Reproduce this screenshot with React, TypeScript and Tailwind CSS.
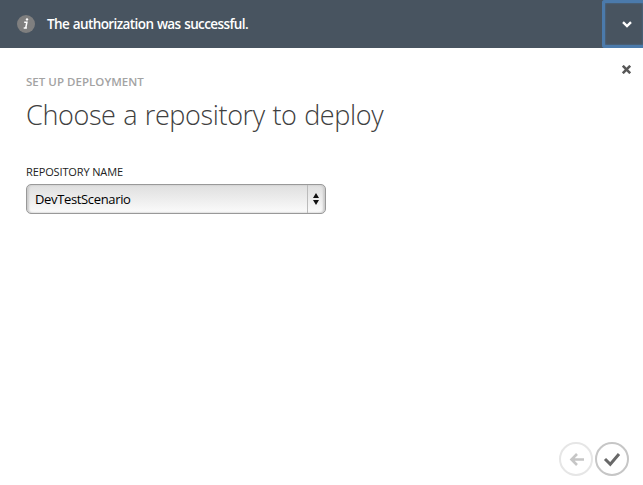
export default function App() {
  return (
    <div className="flex h-[485px] w-[643px] flex-col overflow-hidden bg-white font-['Open_Sans','Noto_Sans',sans-serif]">
      <header className="flex h-12 shrink-0 items-center justify-between bg-[#485460] pl-[17px]">
        <div className="flex items-center gap-3">
          <svg width="18" height="18" viewBox="0 0 18 18">
            <circle cx="9" cy="9" r="9" fill="#7f7f7f" />
            <path d="M7.2 7.2h2.7L8.7 13h1.2M6.7 13h2.5" fill="none" stroke="#fff" strokeWidth="1.5" />
            <circle cx="10" cy="4.4" r="1.2" fill="#fff" />
          </svg>
          <p className="text-[13.5px] leading-5 font-semibold tracking-[-0.6px] [word-spacing:0.7px] whitespace-nowrap text-white">
            The authorization was successful.
          </p>
        </div>
        <button className="flex h-12 w-[41px] items-center justify-center rounded-l-[3px] border-[3px] border-r-0 border-[#4b7aab] pl-[5px] shadow-[inset_0_0_2px_#4b7aab]" aria-label="Collapse">
          <svg width="10" height="7" viewBox="0 0 10 7" fill="none" stroke="#fff" strokeWidth="2.4">
            <path d="M1 1.2 5 5 9 1.2" />
          </svg>
        </button>
      </header>

      <main className="flex flex-1 flex-col pl-[26px]">
        <div className="flex items-start justify-between pt-[17px] pr-[12px]">
          <h2 className="mt-2 text-[11.5px] leading-[18px] font-semibold tracking-[0.03px] whitespace-nowrap text-[#a3a3a3]">
            <span>SET UP DEPLOYMENT</span>
          </h2>
          <button aria-label="Close">
            <svg width="9" height="9" viewBox="0 0 9 9" stroke="#585858" strokeWidth="2.6" fill="none">
              <path d="m.8.8 7.4 7.4M8.2.8.8 8.2" />
            </svg>
          </button>
        </div>
        <h1 className="mt-1 text-[27px] leading-10 font-light tracking-[-0.37px] [word-spacing:1px] whitespace-nowrap text-[#404040]">
          <span>Choose a repository to deploy</span>
        </h1>
        <label className="mt-[28px] text-[11px] leading-[18px] tracking-[-0.13px] whitespace-nowrap text-[#222]">
          <span>REPOSITORY NAME</span>
        </label>
        <div className="mt-[3px] flex h-[30px] w-[300px] items-stretch justify-between rounded-[5px] border border-[#999] bg-linear-to-b from-[#dfdfdf] to-[#fbfbfb] shadow-[inset_2px_0_2px_#ccc,inset_-2px_0_2px_#ccc]">
          <span className="pl-2 text-[13px] leading-[28px] tracking-[-0.35px] whitespace-nowrap text-black">DevTestScenario</span>
          <span className="flex w-[18px] items-center justify-center border-l border-[#bbb] pr-[2px]">
            <svg width="6" height="12" viewBox="0 0 6 12" fill="#111">
              <path d="M0 5 3 0l3 5zM0 7h6l-3 5z" />
            </svg>
          </span>
        </div>
        <footer className="mt-auto flex justify-end gap-[2px] pr-[14px] pb-[9px]">
          <button aria-label="Back">
            <svg width="34" height="34" viewBox="0 0 34 34" fill="none">
              <circle cx="17" cy="17" r="16" stroke="#e6e6e6" strokeWidth="2" />
              <path d="M25 17.5H12.5M18 12l-5.5 5.5L18 23" stroke="#c6c6c6" strokeWidth="2.6" />
            </svg>
          </button>
          <button aria-label="Finish">
            <svg width="34" height="34" viewBox="0 0 34 34" fill="none">
              <circle cx="17" cy="17" r="16" stroke="#c6c6c6" strokeWidth="2" />
              <path d="m10 17 5.3 5.3L24 12" stroke="#686868" strokeWidth="3" />
            </svg>
          </button>
        </footer>
      </main>
    </div>
  );
}
